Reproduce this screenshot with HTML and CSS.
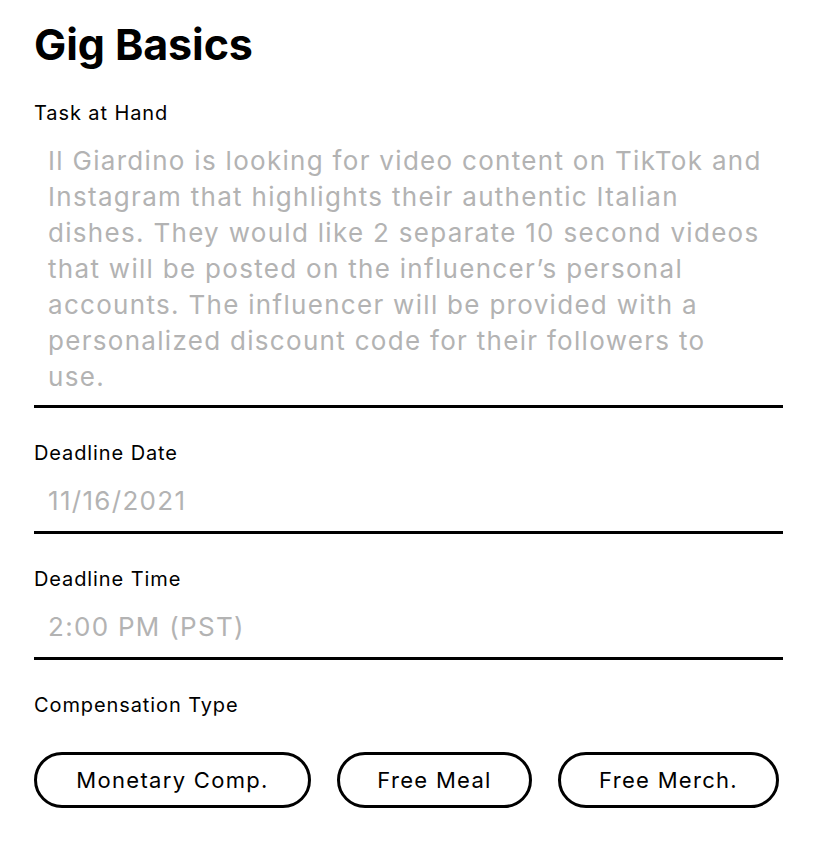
FILE: index.html
```html
<!DOCTYPE html>
<html>
<head>
<meta charset="utf-8">
<link rel="stylesheet" href="styles.css">
</head>
<body>
<div class="page">
  <h1 class="title">Gig Basics</h1>

  <div class="field field-first">
    <div class="label">Task at Hand</div>
    <div class="value value-long">Il Giardino is looking for video content on TikTok and Instagram that highlights their authentic Italian dishes. They would like 2 separate 10 second videos that will be posted on the influencer’s personal accounts. The influencer will be provided with a personalized discount code for their followers to use.</div>
  </div>

  <div class="field">
    <div class="label">Deadline Date</div>
    <div class="value">11/16/2021</div>
  </div>

  <div class="field">
    <div class="label">Deadline Time</div>
    <div class="value">2:00 PM (PST)</div>
  </div>

  <div class="comp">
    <div class="label">Compensation Type</div>
    <div class="pills">
      <button class="pill pill-money">Monetary Comp.</button>
      <button class="pill pill-meal">Free Meal</button>
      <button class="pill pill-merch">Free Merch.</button>
    </div>
  </div>
</div>
</body>
</html>
```

FILE: styles.css
```css
* { box-sizing: border-box; }
html, body { margin: 0; padding: 0; background: #fff; }
body {
  font-family: Inter, "Liberation Sans", sans-serif;
  color: #000;
}
.page {
  padding: 18px 0 0 34px;
  width: 783px;
}
.title {
  margin: 0;
  font-size: 43px;
  line-height: 52px;
  font-weight: 700;
  letter-spacing: -0.1px;
}
.label {
  font-size: 20px;
  line-height: 24px;
  font-weight: 400;
  letter-spacing: 0.9px;
}
.field {
  margin-top: 33px;
  border-bottom: 3px solid #000;
}
.field-first { margin-top: 31px; }
.value {
  margin-top: 18px;
  padding: 0 14px 12px 14px;
  font-size: 26px;
  line-height: 36px;
  color: #b3b3b3;
  letter-spacing: 1.3px;
}
.value-long { padding-bottom: 10px; }
.comp { margin-top: 33px; }
.pills {
  margin-top: 35px;
  display: flex;
  gap: 26px;
}
.pill {
  height: 56px;
  border: 3px solid #000;
  border-radius: 28px;
  background: #fff;
  font-family: inherit;
  font-size: 22px;
  letter-spacing: 1.3px;
  color: #000;
  padding: 0;
  display: flex;
  align-items: center;
  justify-content: center;
}
.pill-money { width: 277px; }
.pill-meal { width: 195px; }
.pill-merch { width: 221px; }
```
